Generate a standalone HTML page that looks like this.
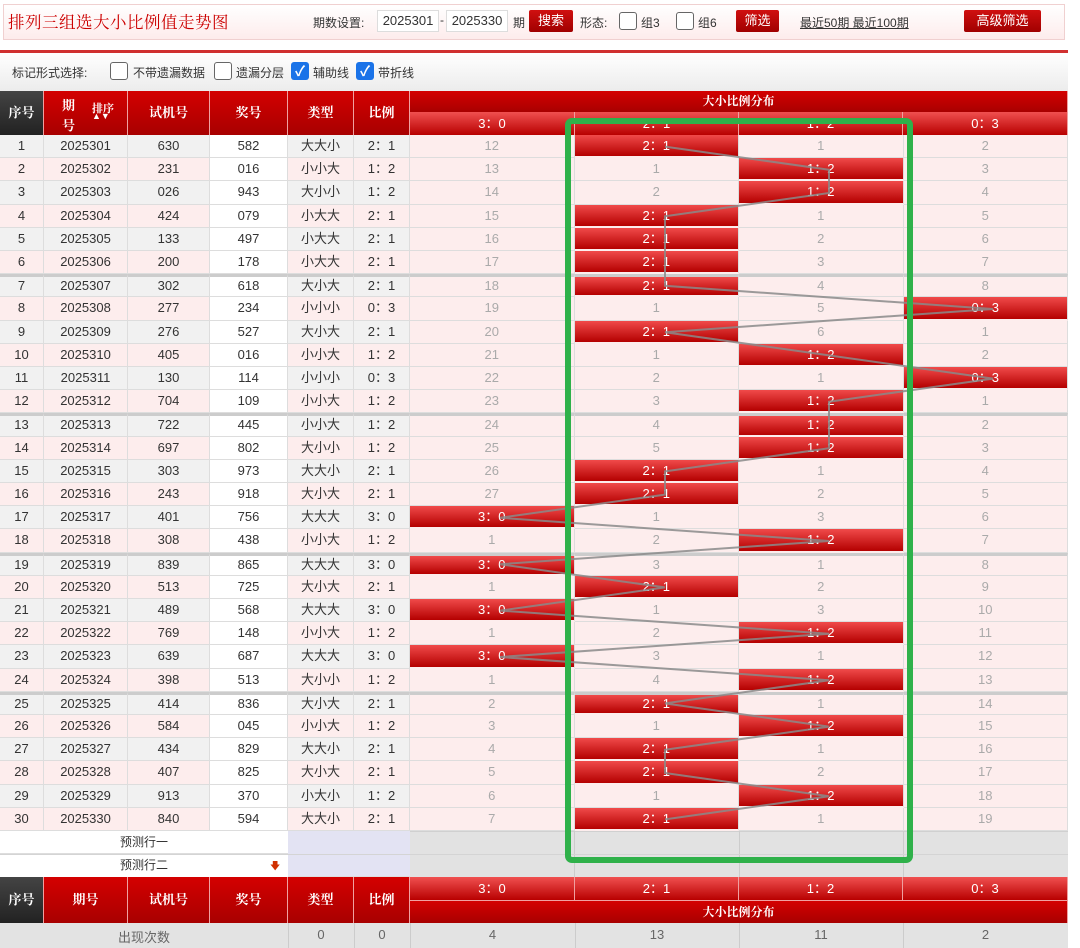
<!DOCTYPE html>
<html><head><meta charset="utf-8"><style>
*{box-sizing:border-box;margin:0;padding:0}
body{width:1080px;height:948px;position:relative;background:#fff;font-family:"Liberation Sans","Noto Sans CJK SC",sans-serif;overflow:hidden;color:#333}
.a{position:absolute}
.top{left:3px;top:4px;width:1062px;height:36px;background:linear-gradient(#fff,#fdecec);border:1px solid #f0d0d0}
.title{left:8px;top:9px;font-family:"Liberation Serif","Noto Serif CJK SC",serif;font-size:16.5px;color:#c00;letter-spacing:0.5px}
.sm{font-size:12px;color:#333}
.inp{background:#fff;border:1px solid #ddd;height:22px;font-size:13px;line-height:20px;text-align:center;color:#333}
.btn{background:linear-gradient(#d01010,#a00000);color:#fff;font-size:13px;text-align:center;line-height:22px;height:22px;border-radius:2px}
.cb{width:18px;height:18px;border:1px solid #666;border-radius:3px;background:#fff}
.cbc{width:18px;height:18px;border-radius:3px;background:#1a73e8;color:#fff;font-size:14px;line-height:18px;text-align:center;font-weight:bold}
.redline{left:0;top:50px;width:1068px;height:3px;background:#d03030}
.bar{left:0;top:53px;width:1068px;height:38px;background:linear-gradient(#fff,#ececec)}
.r{position:absolute;left:0;width:1068px;height:23.2px;display:flex;font-size:13px}
.r i{font-style:normal;display:block;height:100%;text-align:center;line-height:22px;border-right:1px solid #ddd;border-bottom:1px solid #ddd;color:#333}
.r i:nth-child(1){width:44px}.r i:nth-child(2){width:84px}.r i:nth-child(3){width:82px}.r i:nth-child(4){width:78px;background:#fff}.r i:nth-child(5){width:66px}.r i:nth-child(6){width:56px}
.r i:nth-child(n+7){width:164.5px;background:#fdeded;color:#aaa}
.o i{background:#f1f1f1}.e i{background:#fdeded}
.r i.h{background:linear-gradient(#f04a4a,#b40000);color:#fff;border-bottom:2px solid #fdeded}
.s i{border-top:3px solid #ccc;line-height:18px}
.hd{position:absolute;color:#fff;font-size:13px;text-align:center;font-family:"Liberation Serif","Noto Serif CJK SC",serif;font-weight:bold;border-right:1px solid #f0a0a0}
.red{background:linear-gradient(#d40000,#a80000)}
.lred{background:linear-gradient(#f05050,#b80000);font-family:"Liberation Sans","Noto Sans CJK SC",sans-serif}
.dark{background:linear-gradient(#444,#222)}
</style></head><body>
<div class="a top"></div>
<div class="a title">排列三组选大小比例值走势图</div>
<div class="a sm" style="left:313px;top:14px">期数设置:</div>
<div class="a inp" style="left:377px;top:10px;width:62px">2025301</div>
<div class="a sm" style="left:440px;top:13px">-</div>
<div class="a inp" style="left:446px;top:10px;width:62px">2025330</div>
<div class="a sm" style="left:513px;top:14px">期</div>
<div class="a btn" style="left:529px;top:10px;width:44px">搜索</div>
<div class="a sm" style="left:580px;top:14px">形态:</div>
<div class="a cb" style="left:619px;top:12px"></div><div class="a sm" style="left:641px;top:14px">组3</div>
<div class="a cb" style="left:676px;top:12px"></div><div class="a sm" style="left:698px;top:14px">组6</div>
<div class="a btn" style="left:736px;top:10px;width:43px">筛选</div>
<div class="a sm" style="left:800px;top:14px;text-decoration:underline">最近50期 最近100期</div>
<div class="a btn" style="left:964px;top:10px;width:77px">高级筛选</div>
<div class="a redline"></div><div class="a bar"></div>
<div class="a sm" style="left:12px;top:64px">标记形式选择:</div>
<div class="a cb" style="left:110px;top:62px"></div><div class="a sm" style="left:133px;top:64px">不带遗漏数据</div>
<div class="a cb" style="left:214px;top:62px"></div><div class="a sm" style="left:236px;top:64px">遗漏分层</div>
<div class="a cbc" style="left:291px;top:62px">✓</div><div class="a sm" style="left:313px;top:64px">辅助线</div>
<div class="a cbc" style="left:356px;top:62px">✓</div><div class="a sm" style="left:378px;top:64px">带折线</div>

<div class="hd dark" style="left:0;top:91px;width:44px;height:44px;line-height:44px">序号</div>
<div class="hd red" style="left:44px;top:91px;width:84px;height:44px"><span class="a" style="left:18px;top:4px">期</span><span class="a" style="left:18px;top:24px">号</span><span class="a" style="left:48px;top:9px;font-size:11px">排序</span><span class="a" style="left:48px;top:20px;font-size:9px">▲▼</span></div>
<div class="hd red" style="left:128px;top:91px;width:82px;height:44px;line-height:44px">试机号</div>
<div class="hd red" style="left:210px;top:91px;width:78px;height:44px;line-height:44px">奖号</div>
<div class="hd red" style="left:288px;top:91px;width:66px;height:44px;line-height:44px">类型</div>
<div class="hd red" style="left:354px;top:91px;width:56px;height:44px;line-height:44px">比例</div>
<div class="hd red" style="left:410px;top:91px;width:658px;height:21px;line-height:21px;font-size:12px">大小比例分布</div>
<div class="hd lred" style="left:410px;top:112px;width:165px;height:23px;line-height:23px;font-weight:normal">3：0</div>
<div class="hd lred" style="left:575px;top:112px;width:164px;height:23px;line-height:23px;font-weight:normal">2：1</div>
<div class="hd lred" style="left:739px;top:112px;width:164px;height:23px;line-height:23px;font-weight:normal">1：2</div>
<div class="hd lred" style="left:903px;top:112px;width:165px;height:23px;line-height:23px;font-weight:normal">0：3</div>

<div class="r o" style="top:135px"><i>1</i><i>2025301</i><i>630</i><i>582</i><i>大大小</i><i>2：1</i><i>12</i><i class="h">2：1</i><i>1</i><i>2</i></div>
<div class="r e" style="top:158.2px"><i>2</i><i>2025302</i><i>231</i><i>016</i><i>小小大</i><i>1：2</i><i>13</i><i>1</i><i class="h">1：2</i><i>3</i></div>
<div class="r o" style="top:181.4px"><i>3</i><i>2025303</i><i>026</i><i>943</i><i>大小小</i><i>1：2</i><i>14</i><i>2</i><i class="h">1：2</i><i>4</i></div>
<div class="r e" style="top:204.6px"><i>4</i><i>2025304</i><i>424</i><i>079</i><i>小大大</i><i>2：1</i><i>15</i><i class="h">2：1</i><i>1</i><i>5</i></div>
<div class="r o" style="top:227.8px"><i>5</i><i>2025305</i><i>133</i><i>497</i><i>小大大</i><i>2：1</i><i>16</i><i class="h">2：1</i><i>2</i><i>6</i></div>
<div class="r e" style="top:251px"><i>6</i><i>2025306</i><i>200</i><i>178</i><i>小大大</i><i>2：1</i><i>17</i><i class="h">2：1</i><i>3</i><i>7</i></div>
<div class="r o s" style="top:274.2px"><i>7</i><i>2025307</i><i>302</i><i>618</i><i>大小大</i><i>2：1</i><i>18</i><i class="h">2：1</i><i>4</i><i>8</i></div>
<div class="r e" style="top:297.4px"><i>8</i><i>2025308</i><i>277</i><i>234</i><i>小小小</i><i>0：3</i><i>19</i><i>1</i><i>5</i><i class="h">0：3</i></div>
<div class="r o" style="top:320.6px"><i>9</i><i>2025309</i><i>276</i><i>527</i><i>大小大</i><i>2：1</i><i>20</i><i class="h">2：1</i><i>6</i><i>1</i></div>
<div class="r e" style="top:343.8px"><i>10</i><i>2025310</i><i>405</i><i>016</i><i>小小大</i><i>1：2</i><i>21</i><i>1</i><i class="h">1：2</i><i>2</i></div>
<div class="r o" style="top:367px"><i>11</i><i>2025311</i><i>130</i><i>114</i><i>小小小</i><i>0：3</i><i>22</i><i>2</i><i>1</i><i class="h">0：3</i></div>
<div class="r e" style="top:390.2px"><i>12</i><i>2025312</i><i>704</i><i>109</i><i>小小大</i><i>1：2</i><i>23</i><i>3</i><i class="h">1：2</i><i>1</i></div>
<div class="r o s" style="top:413.4px"><i>13</i><i>2025313</i><i>722</i><i>445</i><i>小小大</i><i>1：2</i><i>24</i><i>4</i><i class="h">1：2</i><i>2</i></div>
<div class="r e" style="top:436.6px"><i>14</i><i>2025314</i><i>697</i><i>802</i><i>大小小</i><i>1：2</i><i>25</i><i>5</i><i class="h">1：2</i><i>3</i></div>
<div class="r o" style="top:459.8px"><i>15</i><i>2025315</i><i>303</i><i>973</i><i>大大小</i><i>2：1</i><i>26</i><i class="h">2：1</i><i>1</i><i>4</i></div>
<div class="r e" style="top:483px"><i>16</i><i>2025316</i><i>243</i><i>918</i><i>大小大</i><i>2：1</i><i>27</i><i class="h">2：1</i><i>2</i><i>5</i></div>
<div class="r o" style="top:506.2px"><i>17</i><i>2025317</i><i>401</i><i>756</i><i>大大大</i><i>3：0</i><i class="h">3：0</i><i>1</i><i>3</i><i>6</i></div>
<div class="r e" style="top:529.4px"><i>18</i><i>2025318</i><i>308</i><i>438</i><i>小小大</i><i>1：2</i><i>1</i><i>2</i><i class="h">1：2</i><i>7</i></div>
<div class="r o s" style="top:552.6px"><i>19</i><i>2025319</i><i>839</i><i>865</i><i>大大大</i><i>3：0</i><i class="h">3：0</i><i>3</i><i>1</i><i>8</i></div>
<div class="r e" style="top:575.8px"><i>20</i><i>2025320</i><i>513</i><i>725</i><i>大小大</i><i>2：1</i><i>1</i><i class="h">2：1</i><i>2</i><i>9</i></div>
<div class="r o" style="top:599px"><i>21</i><i>2025321</i><i>489</i><i>568</i><i>大大大</i><i>3：0</i><i class="h">3：0</i><i>1</i><i>3</i><i>10</i></div>
<div class="r e" style="top:622.2px"><i>22</i><i>2025322</i><i>769</i><i>148</i><i>小小大</i><i>1：2</i><i>1</i><i>2</i><i class="h">1：2</i><i>11</i></div>
<div class="r o" style="top:645.4px"><i>23</i><i>2025323</i><i>639</i><i>687</i><i>大大大</i><i>3：0</i><i class="h">3：0</i><i>3</i><i>1</i><i>12</i></div>
<div class="r e" style="top:668.6px"><i>24</i><i>2025324</i><i>398</i><i>513</i><i>大小小</i><i>1：2</i><i>1</i><i>4</i><i class="h">1：2</i><i>13</i></div>
<div class="r o s" style="top:691.8px"><i>25</i><i>2025325</i><i>414</i><i>836</i><i>大小大</i><i>2：1</i><i>2</i><i class="h">2：1</i><i>1</i><i>14</i></div>
<div class="r e" style="top:715px"><i>26</i><i>2025326</i><i>584</i><i>045</i><i>小小大</i><i>1：2</i><i>3</i><i>1</i><i class="h">1：2</i><i>15</i></div>
<div class="r o" style="top:738.2px"><i>27</i><i>2025327</i><i>434</i><i>829</i><i>大大小</i><i>2：1</i><i>4</i><i class="h">2：1</i><i>1</i><i>16</i></div>
<div class="r e" style="top:761.4px"><i>28</i><i>2025328</i><i>407</i><i>825</i><i>大小大</i><i>2：1</i><i>5</i><i class="h">2：1</i><i>2</i><i>17</i></div>
<div class="r o" style="top:784.6px"><i>29</i><i>2025329</i><i>913</i><i>370</i><i>小大小</i><i>1：2</i><i>6</i><i>1</i><i class="h">1：2</i><i>18</i></div>
<div class="r e" style="top:807.8px"><i>30</i><i>2025330</i><i>840</i><i>594</i><i>大大小</i><i>2：1</i><i>7</i><i class="h">2：1</i><i>1</i><i>19</i></div>

<div class="a" style="left:0;top:831px;width:288px;height:23px;background:#fff;border-bottom:1px solid #ddd;font-size:12px;text-align:center;line-height:23px">预测行一</div>
<div class="a" style="left:0;top:854px;width:288px;height:23px;background:#fff;font-size:12px;text-align:center;line-height:23px">预测行二<span class="a" style="left:270px;top:1px;color:#d03000;font-size:10px">🡇</span></div>
<div class="a" style="left:288px;top:831px;width:122px;height:46px;background:#e3e3f3;border-bottom:1px solid #ddd"></div>
<div class="a" style="left:410px;top:831px;width:658px;height:46px;background:#e2e2e2;border-top:1px solid #d0d0d0"></div>
<div class="a" style="left:574px;top:831px;width:1px;height:46px;background:#ccc"></div>
<div class="a" style="left:739px;top:831px;width:1px;height:46px;background:#ccc"></div>
<div class="a" style="left:903px;top:831px;width:1px;height:46px;background:#ccc"></div>
<div class="a" style="left:0;top:854px;width:1068px;height:1px;background:#d4d4d4"></div>

<div class="hd dark" style="left:0;top:877px;width:44px;height:46px;line-height:46px">序号</div>
<div class="hd red" style="left:44px;top:877px;width:84px;height:46px;line-height:46px">期号</div>
<div class="hd red" style="left:128px;top:877px;width:82px;height:46px;line-height:46px">试机号</div>
<div class="hd red" style="left:210px;top:877px;width:78px;height:46px;line-height:46px">奖号</div>
<div class="hd red" style="left:288px;top:877px;width:66px;height:46px;line-height:46px">类型</div>
<div class="hd red" style="left:354px;top:877px;width:56px;height:46px;line-height:46px">比例</div>
<div class="hd lred" style="left:410px;top:877px;width:165px;height:23px;line-height:23px;font-weight:normal">3：0</div>
<div class="hd lred" style="left:575px;top:877px;width:164px;height:23px;line-height:23px;font-weight:normal">2：1</div>
<div class="hd lred" style="left:739px;top:877px;width:164px;height:23px;line-height:23px;font-weight:normal">1：2</div>
<div class="hd lred" style="left:903px;top:877px;width:165px;height:23px;line-height:23px;font-weight:normal">0：3</div>
<div class="hd red" style="left:410px;top:900px;width:658px;height:23px;line-height:23px;font-size:12px;border-top:1px solid #f0a0a0">大小比例分布</div>

<div class="a" style="left:0;top:923px;width:1068px;height:25px;background:#e3e3e3;font-size:13px;color:#666">
<span class="a" style="left:0;width:288px;text-align:center;top:4px">出现次数</span>
<span class="a" style="left:288px;width:66px;text-align:center;top:4px">0</span>
<span class="a" style="left:354px;width:56px;text-align:center;top:4px">0</span>
<span class="a" style="left:410px;width:165px;text-align:center;top:4px">4</span>
<span class="a" style="left:575px;width:164px;text-align:center;top:4px">13</span>
<span class="a" style="left:739px;width:164px;text-align:center;top:4px">11</span>
<span class="a" style="left:903px;width:165px;text-align:center;top:4px">2</span>
<span class="a" style="left:288px;top:0;width:1px;height:25px;background:#ccc"></span>
<span class="a" style="left:354px;top:0;width:1px;height:25px;background:#ccc"></span>
<span class="a" style="left:410px;top:0;width:1px;height:25px;background:#ccc"></span>
<span class="a" style="left:575px;top:0;width:1px;height:25px;background:#ccc"></span>
<span class="a" style="left:739px;top:0;width:1px;height:25px;background:#ccc"></span>
<span class="a" style="left:903px;top:0;width:1px;height:25px;background:#ccc"></span>
</div>

<svg class="a" style="left:0;top:0" width="1080" height="948">
<polyline fill="none" stroke="#8a8a8a" stroke-width="2" stroke-opacity="0.85" points="665,146.6 829,169.8 829,193 665,216.2 665,239.4 665,262.6 665,285.8 993,309 665,332.2 829,355.4 993,378.6 829,401.8 829,425 829,448.2 665,471.4 665,494.6 500,517.8 829,541 500,564.2 665,587.4 500,610.6 829,633.8 500,657 829,680.2 665,703.4 829,726.6 665,749.8 665,773 829,796.2 665,819.4"/>
<rect x="568" y="121" width="342" height="739" rx="4" fill="none" stroke="#2fb14a" stroke-width="6"/>
</svg>
</body></html>
